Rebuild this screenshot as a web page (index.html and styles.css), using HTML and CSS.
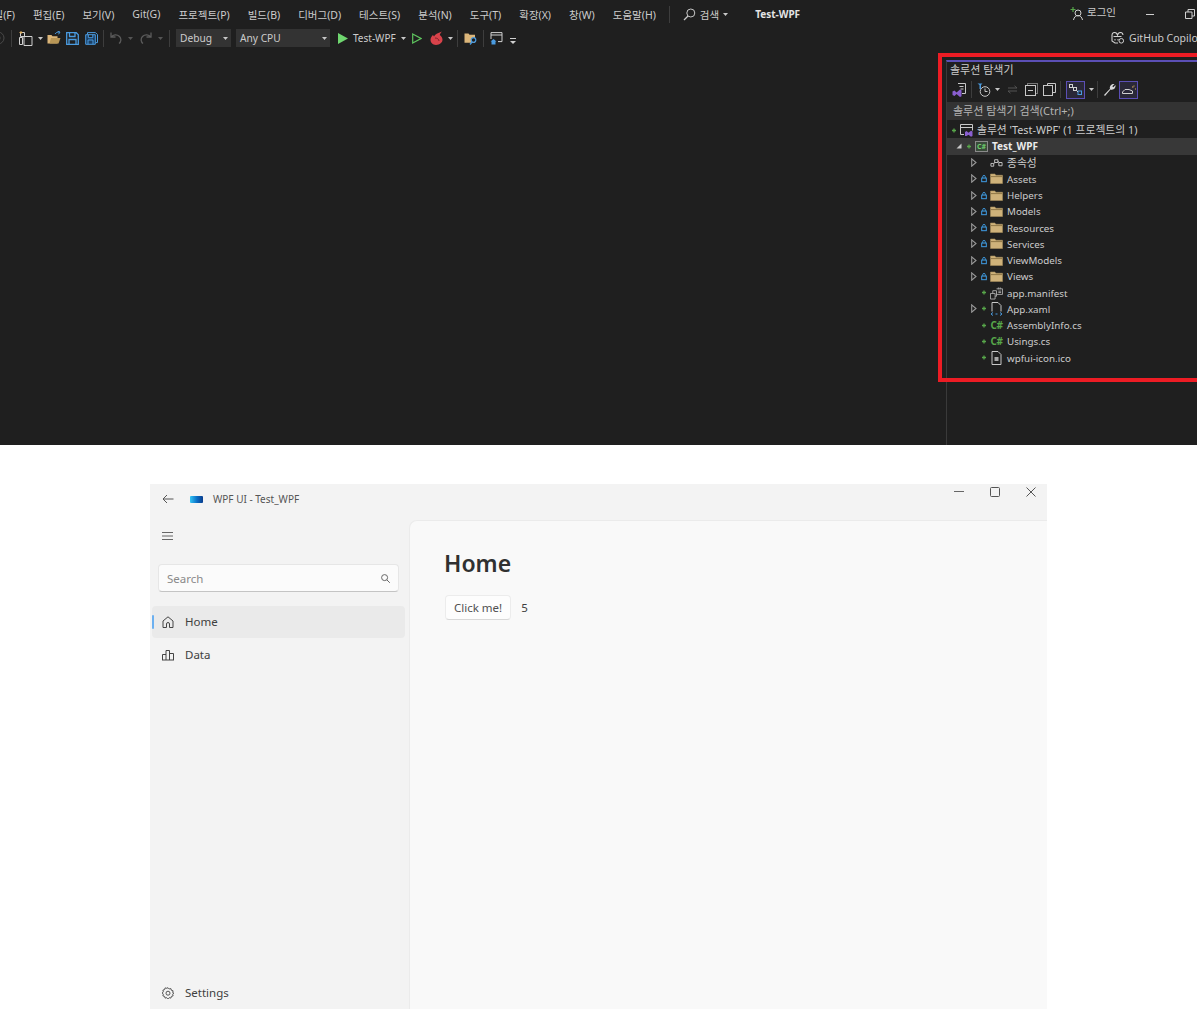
FILE: index.html
```html
<!DOCTYPE html>
<html lang="ko">
<head>
    <meta charset="UTF-8">
    <meta name="viewport" content="width=device-width, initial-scale=1.0">
    <title>Test-WPF</title>
    <link rel="stylesheet" href="styles.css">
</head>
<body>
    <!-- Shared icons -->
    <svg class="sprite" aria-hidden="true">
        <symbol id="i-caret" viewBox="0 0 5 3"><path d="M0 0h5L2.500 3z" fill="currentColor"/></symbol>
        <symbol id="i-twisty" viewBox="0 0 6 9"><path d="M.7.8 5 4.500.7 8.200z" fill="none" stroke="#999999" stroke-width="1.100"/></symbol>
        <symbol id="i-open" viewBox="0 0 6 6"><path d="M5.500.5v5H.5z" fill="#c8c8c8"/></symbol>
        <symbol id="i-plus" viewBox="0 0 5 5"><path d="M2.500.5v4M.5 2.500h4" stroke="#57a64a" stroke-width="1.300"/></symbol>
        <symbol id="i-lock" viewBox="0 0 7 9"><path d="M2 4V2.400a1.500 1.500 0 0 1 3 0V4" fill="none" stroke="#3f9ae0" stroke-width="1.100"/><rect x=".8" y="4" width="5.400" height="4.200" fill="none" stroke="#3f9ae0" stroke-width="1.200"/></symbol>
        <symbol id="i-folder" viewBox="0 0 13 11"><path d="M.5 1h4.200l1.300 1.300h6.500v8.200H.5z" fill="#cfb27a" stroke="#a68d5c" stroke-width=".6"/><path d="M1 3.600h11" stroke="#8f7747"/></symbol>
        <symbol id="i-file" viewBox="0 0 12 14"><path d="M1.500.5h6l3 3v10h-9z" fill="none" stroke="#c8c8c8"/></symbol>
    </svg>

    <!-- Visual Studio window -->
    <div class="vs">
        <div class="menubar">
            <div class="menu-items">
                <span class="menu-first">일(F)</span>
                <span>편집(E)</span>
                <span>보기(V)</span>
                <span>Git(G)</span>
                <span>프로젝트(P)</span>
                <span>빌드(B)</span>
                <span>디버그(D)</span>
                <span>테스트(S)</span>
                <span>분석(N)</span>
                <span>도구(T)</span>
                <span>확장(X)</span>
                <span>창(W)</span>
                <span>도움말(H)</span>
            </div>
            <i class="sep sep-menu"></i>
            <svg class="search-icon" width="13" height="13" viewBox="0 0 13 13"><circle cx="7.800" cy="5" r="4" fill="none" stroke="#c8c8c8"/><path d="M5 8 1 12" stroke="#c8c8c8" stroke-width="1.200"/></svg>
            <span class="menu-search">검색</span>
            <svg class="caret" width="5" height="3"><use href="#i-caret"/></svg>
            <span class="solution-name">Test-WPF</span>
            <div class="menu-right">
                <svg width="14" height="14" viewBox="0 0 14 14"><path d="M3 0v5M.5 2.500h5" stroke="#57a64a" stroke-width="1.200"/><circle cx="8" cy="6" r="3" fill="none" stroke="#d0d0d0"/><path d="M3.500 13c.5-3 2.500-4.500 4.500-4.500s4 1.500 4.500 4.500" fill="none" stroke="#d0d0d0"/></svg>
                <span class="login">로그인</span>
                <i class="win-min"></i>
                <svg class="win-restore" width="10" height="10" viewBox="0 0 10 10"><path d="M.5 3h6.500v6.500H.5zM3 3V.5h6.500V7H7" fill="none" stroke="#d0d0d0"/></svg>
            </div>
        </div>

        <div class="toolbar">
            <svg class="tb-start" width="14" height="14" viewBox="0 0 14 14"><circle cx="7" cy="7" r="6" fill="none" stroke="#4a4a4a"/><circle cx="7" cy="7" r="2.500" fill="#4a4a4a"/></svg>
            <i class="sep"></i>
            <svg width="15" height="15" viewBox="0 0 15 15"><path d="M2.500 1.500h4v4h-4zM6 5.500h8v9H6zM1.500 6.500h3v7h-3z" fill="none" stroke="#d0d0d0"/><path d="M3 0v3M1.500 1.500h3" stroke="#e0b060"/></svg>
            <svg class="caret caret-tight" width="5" height="3"><use href="#i-caret"/></svg>
            <svg class="tb-open" width="14" height="14" viewBox="0 0 14 14"><path d="M.5 4h4l1 1.200h5v7.300H.5z" fill="#dcb67a"/><path d="M2.500 12.500 4 7h9.500l-2 5.500z" fill="#b89656"/><path d="M8 3c1-1.500 2.500-2 4-2M10.500 0 13 1l-1.500 2.300" fill="none" stroke="#4a9be0"/></svg>
            <svg width="13" height="13" viewBox="0 0 13 13"><path d="M.7.700h9.600l2 2v9.600H.7zM3.500.700v3.800h5.500V.700M3 12.300V7.500h7v4.800" fill="none" stroke="#4a9be0" stroke-width="1.300"/></svg>
            <svg width="13" height="13" viewBox="0 0 13 13"><path d="M2.500 2.500V.6h8l2 2v8h-1.800" fill="none" stroke="#4a9be0"/><path d="M.7 2.700h9.600v9.600H.7zM3.300 2.700v3h4.500v-3M3 12.300V8h5v4.300" fill="#1b3f63" stroke="#4a9be0"/></svg>
            <i class="sep sep-pull"></i>
            <svg width="12" height="12" viewBox="0 0 12 12"><path d="M1 .5v4.500h4.500M1.300 5C3 2.500 7 2 9.500 4.500c2.200 2.300 1.500 5.500-.5 7" fill="none" stroke="#5b5b5b" stroke-width="1.300"/></svg>
            <svg class="caret caret-dim" width="5" height="3"><use href="#i-caret"/></svg>
            <svg class="dim-icon" width="12" height="12" viewBox="0 0 12 12"><path d="M11 .5v4.500H6.500M10.700 5C9 2.500 5 2 2.500 4.500.3 6.800 1 10 3 11.500" fill="none" stroke="#5b5b5b" stroke-width="1.300"/></svg>
            <svg class="caret caret-dim" width="5" height="3"><use href="#i-caret"/></svg>
            <i class="sep"></i>
            <div class="combo combo-debug"><span>Debug</span><svg class="caret" width="5" height="3"><use href="#i-caret"/></svg></div>
            <div class="combo combo-cpu"><span>Any CPU</span><svg class="caret" width="5" height="3"><use href="#i-caret"/></svg></div>
            <svg class="run-icon" width="10" height="11" viewBox="0 0 10 11"><path d="M0 0l10 5.500L0 11z" fill="#6fd66f"/></svg>
            <span class="run-label">Test-WPF</span>
            <svg class="caret caret-tight" width="5" height="3"><use href="#i-caret"/></svg>
            <svg class="run-nodebug" width="10" height="11" viewBox="0 0 10 11"><path d="M.7 1l8.300 4.500L.7 10z" fill="none" stroke="#5ec45e" stroke-width="1.200"/></svg>
            <svg class="flame" width="13" height="14" viewBox="0 0 13 14"><path d="M6 14C2.500 14 .5 11.500.5 8.800.5 6.500 2 5 3 4l1 1.500C5 3.500 7.500 2 12 .5 10.500 2 10 3 9.800 4c1.500 1 2.700 2.700 2.700 4.800C12.500 11.500 9.800 14 6 14z" fill="#d8424a"/><path d="M5 7c2 0 4 1 4 3" fill="none" stroke="#7a2228"/></svg>
            <svg class="caret caret-tight" width="5" height="3"><use href="#i-caret"/></svg>
            <i class="sep"></i>
            <svg width="13" height="13" viewBox="0 0 13 13"><path d="M.5 1.500h4l1 1.200h5.500v8H.5z" fill="#dcb67a"/><circle cx="9.500" cy="8" r="2.300" fill="#1f1f1f" stroke="#4a9be0" stroke-width="1.200"/><path d="M8 10l-2 2.500" stroke="#4a9be0" stroke-width="1.300"/></svg>
            <i class="sep"></i>
            <svg width="13" height="13" viewBox="0 0 13 13"><path d="M1 7V.6h11v9H8M1 3h11" fill="none" stroke="#d0d0d0"/><path d="M3.500 7 .5 9.500h1V12.500h4V9.500h1z" fill="#4a9be0"/></svg>
            <svg class="overflow-icon" width="6" height="6" viewBox="0 0 6 6"><path d="M0 .5h6" stroke="#d0d0d0"/><path d="M0 3h6L3 6z" fill="#d0d0d0"/></svg>
            <div class="copilot">
                <svg width="13" height="12" viewBox="0 0 13 12"><path d="M1 6V3c0-1.500 1-2.500 2.500-2.500S6 1.500 6.500 3C7 1.500 8 .5 9.500.5S12 1.500 12 3M1 6v3l3 2h3" fill="none" stroke="#d0d0d0" stroke-width="1.100"/><path d="M2.500 4.500h8M4 7v1.500M7 7v1.500" stroke="#d0d0d0"/><circle cx="10.300" cy="8.800" r="2.300" fill="#1f1f1f" stroke="#d0d0d0"/></svg>
                <span>GitHub Copilo</span>
            </div>
        </div>

        <div class="workspace">
            <div class="editor"></div>

            <!-- Solution explorer -->
            <div class="explorer">
                <div class="explorer-title">
                    <span>솔루션 탐색기</span>
                    <i class="grip"></i>
                </div>
                <div class="explorer-tools">
                    <svg width="14" height="14" viewBox="0 0 14 14"><path d="M6 .5h7.500v10H10M7.500 3.500h4M8.500 6h3" fill="none" stroke="#c8c8c8"/><path d="M.5 8.500 2.500 7.500 4.500 9.500 8 6.500l1.500.8v6l-1.500.7-3.500-3-2 2-2-1z" fill="#8a5fd0"/></svg>
                    <i class="sep"></i>
                    <svg width="14" height="14" viewBox="0 0 14 14"><circle cx="8" cy="8.500" r="4.800" fill="none" stroke="#c8c8c8"/><path d="M8 5.500v3h2.500" fill="none" stroke="#c8c8c8"/><path d="M.5.500h5L4 2v4H2.500V2z" fill="#4a9be0"/></svg>
                    <svg class="caret caret-tight" width="5" height="3"><use href="#i-caret"/></svg>
                    <svg class="tool-sync" width="11" height="9" viewBox="0 0 11 9"><path d="M1 3h9M7.500.8 10 3M10 6H1M3.500 8.200 1 6" fill="none" stroke="#555"/></svg>
                    <svg width="13" height="13" viewBox="0 0 13 13"><rect x="2.500" y=".5" width="10" height="10" fill="none" stroke="#777"/><rect x=".5" y="2.500" width="10" height="10" fill="#1f1f1f" stroke="#c8c8c8"/><path d="M3 7.500h5" stroke="#c8c8c8"/></svg>
                    <svg width="13" height="13" viewBox="0 0 13 13"><path d="M4.500 2.500V.5h8v9h-2.500" fill="none" stroke="#c8c8c8"/><rect x=".5" y="2.500" width="9" height="10" fill="#1f1f1f" stroke="#c8c8c8"/></svg>
                    <i class="sep sep-pull"></i>
                    <div class="tool-active"><svg width="13" height="11" viewBox="0 0 13 11"><rect x=".5" y=".5" width="3" height="3" fill="none" stroke="#d0d0d0"/><rect x="4.500" y="3.500" width="3" height="3" fill="none" stroke="#d0d0d0"/><rect x="9" y="7" width="3.500" height="3.500" fill="none" stroke="#4a9be0"/><path d="M3.500 3.500l1 1M7.500 6.500 9 8" stroke="#d0d0d0"/></svg></div>
                    <svg class="caret caret-tight" width="5" height="3"><use href="#i-caret"/></svg>
                    <i class="sep"></i>
                    <svg class="tool-wrench" width="13" height="13" viewBox="0 0 13 13"><path d="M1 12 7 5.800C6.200 3.500 8 .5 11.500 1L9.300 3.200l1 1L12.500 2c.5 3-2 5.500-5 4.500L2 13z" fill="#d8d8d8"/></svg>
                    <div class="tool-active"><svg width="14" height="9" viewBox="0 0 14 9"><path d="M.5 8.500h10V6L7 4.500H3L.5 7z" fill="none" stroke="#d0d0d0"/><path d="M10 2h1.500M12 .5v1M13 4h1" stroke="#e0b060"/></svg></div>
                </div>
                <div class="explorer-search">솔루션 탐색기 검색(Ctrl+;)</div>

                <div class="tree">
                    <div class="tree-row level-0">
                        <svg class="state" width="5" height="5"><use href="#i-plus"/></svg>
                        <svg class="node" width="13" height="13" viewBox="0 0 13 13"><path d="M.5.500h12v6M.5.500v10H4M.5 3.500h12" fill="none" stroke="#c8c8c8"/><path d="M5 8l1.500-1 2 1.800L11 6.800l1.500.7v4.500l-1.500.7-2.500-2-2 1.300L5 12z" fill="#8a5fd0"/></svg>
                        <span class="row-label">솔루션 'Test-WPF' (1 프로젝트의 1)</span>
                    </div>
                    <div class="tree-row level-1 selected">
                        <span class="twisty"><svg width="6" height="6"><use href="#i-open"/></svg></span>
                        <svg class="state" width="5" height="5"><use href="#i-plus"/></svg>
                        <span class="node cs-project">C#</span>
                        <strong>Test_WPF</strong>
                    </div>
                    <div class="tree-row level-2">
                        <span class="twisty"><svg width="6" height="9"><use href="#i-twisty"/></svg></span>
                        <i class="state"></i>
                        <svg class="node" width="14" height="9" viewBox="0 0 14 9"><path d="M1 5.500h3v3H1zM5 1.500h3.500v3H5zM9.500 4.500H13v3.500H9.500zM4 5.500 5.500 4.500M8.500 3l1.500 1.500" fill="none" stroke="#c8c8c8"/></svg>
                        <span class="row-label">종속성</span>
                    </div>
                    <div class="tree-row level-2">
                        <span class="twisty"><svg width="6" height="9"><use href="#i-twisty"/></svg></span>
                        <svg class="state" width="7" height="9"><use href="#i-lock"/></svg>
                        <svg class="node" width="13" height="11"><use href="#i-folder"/></svg>
                        <span class="row-text">Assets</span>
                    </div>
                    <div class="tree-row level-2">
                        <span class="twisty"><svg width="6" height="9"><use href="#i-twisty"/></svg></span>
                        <svg class="state" width="7" height="9"><use href="#i-lock"/></svg>
                        <svg class="node" width="13" height="11"><use href="#i-folder"/></svg>
                        <span class="row-text">Helpers</span>
                    </div>
                    <div class="tree-row level-2">
                        <span class="twisty"><svg width="6" height="9"><use href="#i-twisty"/></svg></span>
                        <svg class="state" width="7" height="9"><use href="#i-lock"/></svg>
                        <svg class="node" width="13" height="11"><use href="#i-folder"/></svg>
                        <span class="row-text">Models</span>
                    </div>
                    <div class="tree-row level-2">
                        <span class="twisty"><svg width="6" height="9"><use href="#i-twisty"/></svg></span>
                        <svg class="state" width="7" height="9"><use href="#i-lock"/></svg>
                        <svg class="node" width="13" height="11"><use href="#i-folder"/></svg>
                        <span class="row-text">Resources</span>
                    </div>
                    <div class="tree-row level-2">
                        <span class="twisty"><svg width="6" height="9"><use href="#i-twisty"/></svg></span>
                        <svg class="state" width="7" height="9"><use href="#i-lock"/></svg>
                        <svg class="node" width="13" height="11"><use href="#i-folder"/></svg>
                        <span class="row-text">Services</span>
                    </div>
                    <div class="tree-row level-2">
                        <span class="twisty"><svg width="6" height="9"><use href="#i-twisty"/></svg></span>
                        <svg class="state" width="7" height="9"><use href="#i-lock"/></svg>
                        <svg class="node" width="13" height="11"><use href="#i-folder"/></svg>
                        <span class="row-text">ViewModels</span>
                    </div>
                    <div class="tree-row level-2">
                        <span class="twisty"><svg width="6" height="9"><use href="#i-twisty"/></svg></span>
                        <svg class="state" width="7" height="9"><use href="#i-lock"/></svg>
                        <svg class="node" width="13" height="11"><use href="#i-folder"/></svg>
                        <span class="row-text">Views</span>
                    </div>
                    <div class="tree-row level-2">
                        <span class="twisty"></span>
                        <svg class="state" width="5" height="5"><use href="#i-plus"/></svg>
                        <svg class="node" width="14" height="14" viewBox="0 0 14 14"><path d="M.5 7.500h5v6h-5zM3 7.500V4.500h4v6H5.500M7 2.500h6.500v6H7M9 1v2M11 1v2" fill="none" stroke="#a8a8a8"/><path d="M9 5h3M9 6.500h3" stroke="#a8a8a8"/></svg>
                        <span class="row-text">app.manifest</span>
                    </div>
                    <div class="tree-row level-2">
                        <span class="twisty"><svg width="6" height="9"><use href="#i-twisty"/></svg></span>
                        <svg class="state" width="5" height="5"><use href="#i-plus"/></svg>
                        <svg class="node" width="12" height="14" viewBox="0 0 12 14"><path d="M1.500 9.500V.5h6l3 3v6" fill="none" stroke="#c8c8c8"/><path d="M2.500 10.500.5 12l2 1.500M9.500 10.500l2 1.500-2 1.500M5 12h2" fill="none" stroke="#4a9be0"/></svg>
                        <span class="row-text">App.xaml</span>
                    </div>
                    <div class="tree-row level-2">
                        <span class="twisty"></span>
                        <svg class="state" width="5" height="5"><use href="#i-plus"/></svg>
                        <span class="node cs-file">C#</span>
                        <span class="row-text">AssemblyInfo.cs</span>
                    </div>
                    <div class="tree-row level-2">
                        <span class="twisty"></span>
                        <svg class="state" width="5" height="5"><use href="#i-plus"/></svg>
                        <span class="node cs-file">C#</span>
                        <span class="row-text">Usings.cs</span>
                    </div>
                    <div class="tree-row level-2">
                        <span class="twisty"></span>
                        <svg class="state" width="5" height="5"><use href="#i-plus"/></svg>
                        <svg class="node" width="12" height="14" viewBox="0 0 12 14"><use href="#i-file"/><rect x="4" y="6" width="4" height="4" fill="#a8a8a8"/></svg>
                        <span class="row-text">wpfui-icon.ico</span>
                    </div>
                </div>
            </div>
        </div>

        <!-- Red highlight drawn over the screenshot -->
        <div class="highlight"></div>
    </div>

    <!-- The WPF UI app -->
    <div class="app">
        <div class="app-titlebar">
            <svg class="back" width="12" height="10" viewBox="0 0 12 10"><path d="M11.500 5H1M5 1 1 5l4 4" fill="none" stroke="#555"/></svg>
            <i class="app-logo"></i>
            <span class="app-title">WPF UI - Test_WPF</span>
            <div class="window-buttons">
                <svg width="10" height="10" viewBox="0 0 10 10"><path d="M0 4.500h10" stroke="#666"/></svg>
                <svg width="10" height="10" viewBox="0 0 10 10"><rect x=".5" y=".5" width="9" height="9" rx="1" fill="none" stroke="#555"/></svg>
                <svg width="10" height="10" viewBox="0 0 10 10"><path d="M.5.500l9 9M9.500.500l-9 9" stroke="#555"/></svg>
            </div>
        </div>
        <div class="app-body">
            <div class="sidebar">
                <svg class="hamburger" width="11" height="8" viewBox="0 0 11 8"><path d="M0 .5h11M0 4h11M0 7.500h11" stroke="#666"/></svg>
                <div class="search-box">
                    <span>Search</span>
                    <svg width="9" height="9" viewBox="0 0 9 9"><circle cx="3.600" cy="3.600" r="3" fill="none" stroke="#666"/><path d="M5.800 5.800 8.800 8.800" stroke="#666"/></svg>
                </div>
                <div class="nav-item active">
                    <svg width="12" height="12" viewBox="0 0 12 12"><path d="M1 5 6 .8 11 5v6.500H7.500V8a1.500 1.500 0 0 0-3 0v3.500H1z" fill="none" stroke="#444"/></svg>
                    <span>Home</span>
                </div>
                <div class="nav-item">
                    <svg width="12" height="12" viewBox="0 0 12 12"><path d="M.5 11V5.500H4M4 11V1.500h3.500V11M7.500 4.500h4V11M0 11h12" fill="none" stroke="#444"/></svg>
                    <span>Data</span>
                </div>
                <div class="nav-item nav-settings">
                    <svg width="12" height="12" viewBox="0 0 12 12"><path d="M6 .7 7.200 2l1.700-.4.500 1.700 1.700.5-.4 1.700L11.800 6l-1.100 1.200.4 1.700-1.700.5-.5 1.700-1.700-.4L6 11.900l-1.200-1.200-1.700.4-.5-1.700-1.700-.5.4-1.700L.2 6l1.100-1.200-.4-1.700 1.700-.5.5-1.700 1.700.4z" fill="none" stroke="#444" stroke-width=".9"/><circle cx="6" cy="6.200" r="2" fill="none" stroke="#444" stroke-width=".9"/></svg>
                    <span>Settings</span>
                </div>
            </div>
            <div class="page">
                <h1>Home</h1>
                <div class="page-row">
                    <button class="click-button">Click me!</button>
                    <span>5</span>
                </div>
            </div>
        </div>
    </div>
</body>
</html>
```

FILE: styles.css
```css
/* General styles */
* {
    margin: 0;
    padding: 0;
    box-sizing: border-box;
}

html,
body {
    height: 100%;
    overflow: hidden;
}

body {
    background-color: #ffffff;
    font-family: "Noto Sans", "Noto Sans CJK KR", sans-serif;
}

i {
    display: block;
}

svg {
    display: block;
    flex-shrink: 0;
}

.sprite {
    display: none;
}

/* Visual Studio window */
.vs {
    position: relative;
    height: 445px;
    display: flex;
    flex-direction: column;
    overflow: hidden;
    background-color: #1f1f1f;
    color: #cccccc;
    font-size: 10px;
}

.sep {
    width: 1px;
    height: 17px;
    background-color: #3d3d3d;
    flex-shrink: 0;
}

.sep-pull {
    margin-left: -1px;
}

.caret {
    color: #c8c8c8;
}

.caret-tight {
    margin: 0 -2px 0 -1px;
}

.caret-dim {
    color: #555555;
}

/* Menu bar */
.menubar {
    height: 28px;
    display: flex;
    align-items: center;
    flex-shrink: 0;
}

.menu-items {
    display: flex;
    gap: 18px;
    margin-left: -6.5px;
    font-size: 10.5px;
    white-space: nowrap;
}

.sep-menu {
    margin: 0 13px 0 13px;
}

.search-icon {
    margin-right: 4px;
}

.menu-search {
    margin-right: 4px;
    font-size: 10.5px;
}

.solution-name {
    margin-left: 27px;
    font-weight: 700;
    color: #e4e4e4;
}

.menu-right {
    margin-left: auto;
    width: 127px;
    display: flex;
    align-items: center;
    flex-shrink: 0;
}

.login {
    margin: -6px 0 0 3px;
    font-size: 10.5px;
}

.win-min {
    width: 8px;
    height: 1px;
    margin-left: 30px;
    background-color: #d0d0d0;
}

.win-restore {
    margin-left: 31px;
}

/* Toolbar */
.toolbar {
    height: 20px;
    display: flex;
    align-items: center;
    gap: 6px;
    flex-shrink: 0;
    white-space: nowrap;
}

.tb-start {
    margin-left: -9px;
}

.tb-open {
    margin-right: -1px;
}

.dim-icon {
    margin-left: 1px;
}

.combo {
    height: 18px;
    display: flex;
    align-items: center;
    justify-content: space-between;
    padding: 0 3px 0 4px;
    background-color: #333333;
    font-size: 10.2px;
}

.combo-debug {
    width: 55px;
}

.combo-cpu {
    width: 94px;
    margin-left: -1px;
}

.run-icon {
    margin-left: 2px;
}

.run-label {
    margin-left: -1px;
}

.run-nodebug {
    margin-left: 2px;
}

.flame {
    margin-left: 2px;
}

.overflow-icon {
    margin-left: 1px;
    margin-top: 6px;
}

.copilot {
    margin-left: auto;
    width: 86px;
    display: flex;
    align-items: center;
    gap: 5px;
    flex-shrink: 0;
    font-size: 10.5px;
}

/* Body of the IDE */
.workspace {
    flex: 1;
    display: flex;
    padding-top: 12px;
    min-height: 0;
}

.editor {
    flex: 1;
}

/* Solution explorer */
.explorer {
    width: 251px;
    flex-shrink: 0;
    border-left: 1px solid #3a3a3a;
    border-top: 2px solid #5b4fb5;
}

.explorer-title {
    height: 14px;
    display: flex;
    align-items: center;
    gap: 6px;
    padding-left: 3px;
    font-size: 11px;
}

.grip {
    flex: 1;
    height: 5px;
    background-image: radial-gradient(#4a4a4a 0.6px, transparent 0.7px);
    background-size: 2px 2px;
}

.explorer-tools {
    height: 26px;
    display: flex;
    align-items: center;
    gap: 5px;
    padding: 1px 0 0 5px;
}

.tool-sync {
    margin: 0 2px 0 4px;
}

.tool-wrench {
    margin-right: -2px;
}

.tool-active {
    width: 19px;
    height: 18px;
    display: flex;
    align-items: center;
    justify-content: center;
    border: 1px solid #5b4fb5;
    background-color: #2a2838;
}

.explorer-search {
    height: 18px;
    line-height: 18px;
    padding-left: 6px;
    background-color: #333333;
    color: #b4b4b4;
    font-size: 11px;
    white-space: nowrap;
}

.tree {
    padding-top: 2px;
}

.tree-row {
    height: 16.25px;
    display: flex;
    align-items: center;
    white-space: nowrap;
    font-size: 9.8px;
}

.tree-row strong {
    font-size: 10px;
}

.row-text {
    margin-top: 1px;
}

.row-label {
    margin-top: -1px;
    font-size: 10.8px;
}

.level-0 .row-label {
    margin-top: -2px;
}

.level-0 {
    padding-left: 4px;
}

.level-1 {
    padding-left: 9px;
}

.level-2 {
    padding-left: 24px;
}

.selected {
    background-color: #383838;
    color: #ececec;
}

.twisty {
    width: 10px;
    display: flex;
    flex-shrink: 0;
}

.state {
    width: 9px;
    flex-shrink: 0;
    padding-right: 3px;
}

.node {
    width: 13px;
    margin-right: 4px;
    flex-shrink: 0;
}

.cs-project {
    height: 11px;
    line-height: 9px;
    text-align: center;
    font-size: 7px;
    font-weight: 700;
    color: #6fcf6f;
    border: 1px solid #8a8a8a;
    background-color: #3a4a3a;
}

.cs-file {
    text-align: center;
    font-size: 10px;
    font-weight: 700;
    color: #57a64a;
    letter-spacing: -0.5px;
}

.highlight {
    position: absolute;
    top: 53px;
    left: 938px;
    width: 280px;
    height: 329px;
    border: 4px solid #ed1c24;
    pointer-events: none;
}

/* The WPF UI app */
.app {
    width: 897px;
    height: 525px;
    margin: 39px 0 0 150px;
    display: flex;
    flex-direction: column;
    background-color: #f3f3f3;
    color: #404040;
    font-size: 11.5px;
}

.app-titlebar {
    height: 36px;
    display: flex;
    align-items: center;
    flex-shrink: 0;
    padding: 0 0 6px 12px;
}

.back {
    margin-right: 16px;
}

.app-logo {
    width: 13px;
    height: 7px;
    margin-right: 10px;
    border-radius: 1px;
    background: linear-gradient(90deg, #33c5f5, #0a6cc4 55%, #0a3d8c);
}

.app-title {
    font-size: 10px;
    color: #555555;
}

.window-buttons {
    margin-left: auto;
    align-self: flex-start;
    display: flex;
    gap: 26px;
    padding: 3px 11px 0 0;
}

.app-body {
    flex: 1;
    display: flex;
    min-height: 0;
}

/* Sidebar */
.sidebar {
    width: 259px;
    display: flex;
    flex-direction: column;
    flex-shrink: 0;
    padding: 12px 4px 0 2px;
}

.hamburger {
    margin: 0 0 24px 10px;
}

.search-box {
    height: 28px;
    margin: 0 6px 14px 6px;
    display: flex;
    align-items: center;
    justify-content: space-between;
    padding: 0 8px;
    background-color: #fbfbfb;
    border: 1px solid #e6e6e6;
    border-bottom-color: #c4c4c4;
    border-radius: 4px;
    color: #8a8a8a;
}

.nav-item {
    position: relative;
    height: 32px;
    margin-bottom: 1px;
    display: flex;
    align-items: center;
    gap: 11px;
    padding-left: 10px;
    border-radius: 4px;
}

.nav-item span {
    margin-top: -1px;
}

.nav-item.active {
    background-color: #eaeaea;
}

/* Accent bar at the edge of the selected item */
.nav-item.active::before {
    content: "";
    position: absolute;
    left: 0;
    top: 9px;
    width: 2px;
    height: 14px;
    border-radius: 1px;
    background-color: #6cb0f0;
}

.nav-settings {
    margin-top: auto;
    margin-bottom: 0;
}

/* Page */
.page {
    flex: 1;
    padding: 27px 34px;
    background-color: #f9f9f9;
    border-top: 1px solid #ebebeb;
    border-left: 1px solid #ebebeb;
    border-top-left-radius: 8px;
}

.page h1 {
    font-size: 23px;
    font-weight: 600;
    line-height: 30px;
    color: #303030;
    margin-bottom: 17px;
}

.page-row {
    display: flex;
    align-items: center;
    gap: 10px;
}

.click-button {
    height: 25px;
    margin-left: 1px;
    padding: 0 8px;
    background-color: #fdfdfd;
    border: 1px solid #ececec;
    border-bottom-color: #d8d8d8;
    border-radius: 4px;
    color: #505050;
    font-family: inherit;
    font-size: 11.5px;
}
```
